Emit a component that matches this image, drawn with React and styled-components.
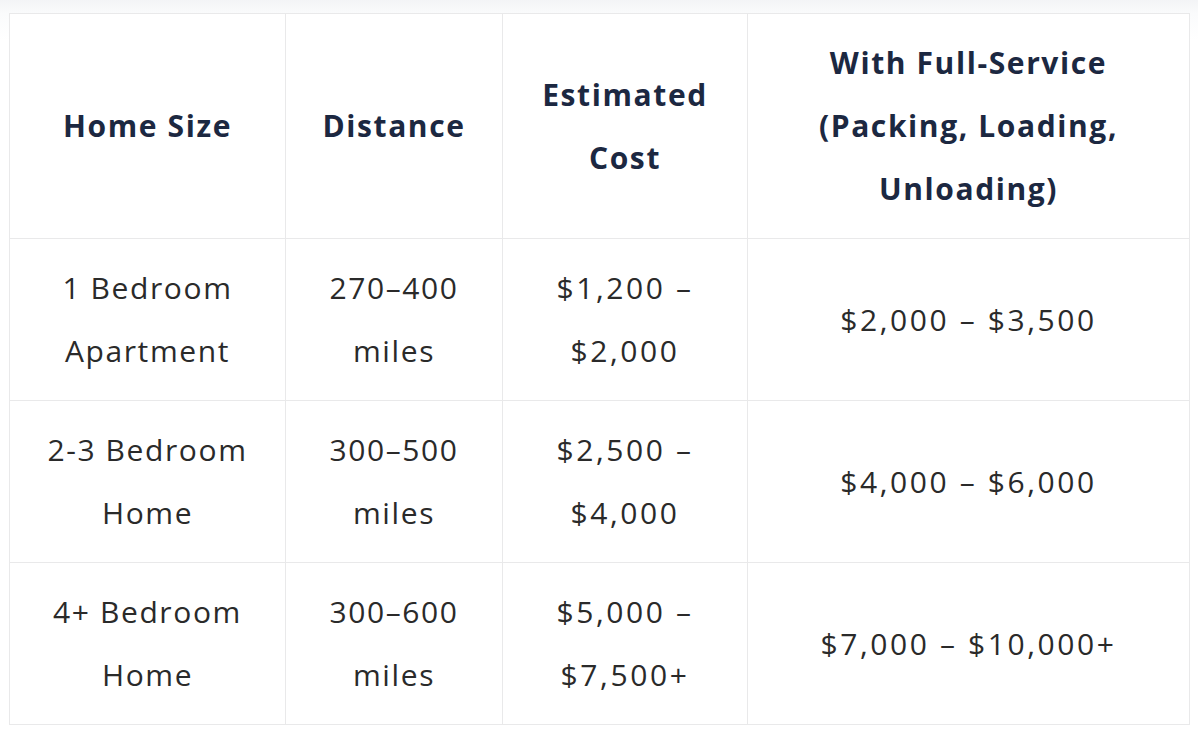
import React from 'react';
import styled, { createGlobalStyle } from 'styled-components';

const GlobalStyle = createGlobalStyle`
  html, body {
    margin: 0;
    padding: 0;
    background: #ffffff;
  }
  body {
    font-family: "Open Sans", "Liberation Sans", sans-serif;
  }
`;

const Page = styled.div`
  width: 1198px;
  height: 733px;
  box-sizing: border-box;
  padding: 13px 9px 0 9px;
  background: linear-gradient(180deg, #f3f4f6 0px, #fafbfc 14px, #ffffff 40px);
`;

const Table = styled.table`
  border-collapse: collapse;
  table-layout: fixed;
  width: 1181px;
  background: #ffffff;
`;

const Head = styled.th`
  border: 1px solid #e9e9ea;
  padding: 17px 12px 18px;
  box-sizing: border-box;
  font-size: 30px;
  line-height: 63px;
  font-weight: 700;
  color: #1c2841;
  letter-spacing: 1.6px;
  text-align: center;
  vertical-align: middle;
`;

const Cell = styled.td`
  border: 1px solid #e9e9ea;
  padding: 17px 10px 18px;
  box-sizing: border-box;
  font-size: 30px;
  line-height: 63px;
  font-weight: 400;
  color: #2a2a2a;
  letter-spacing: ${p => (p.$price ? '2.6px' : '1.6px')};
  text-align: center;
  vertical-align: middle;
`;

const columns = [
  { label: 'Home Size', width: 276 },
  { label: 'Distance', width: 217 },
  { label: 'Estimated Cost', width: 245 },
  { label: 'With Full-Service (Packing, Loading, Unloading)', width: 442 },
];

const rows = [
  ['1 Bedroom Apartment', '270–400 miles', '$1,200 – $2,000', '$2,000 – $3,500'],
  ['2-3 Bedroom Home', '300–500 miles', '$2,500 – $4,000', '$4,000 – $6,000'],
  ['4+ Bedroom Home', '300–600 miles', '$5,000 – $7,500+', '$7,000 – $10,000+'],
];

export default function App() {
  return (
    <>
      <GlobalStyle />
      <Page>
        <Table>
          <colgroup>
            {columns.map(c => (
              <col key={c.label} style={{ width: c.width }} />
            ))}
          </colgroup>
          <thead>
            <tr>
              {columns.map(c => (
                <Head key={c.label}>{c.label}</Head>
              ))}
            </tr>
          </thead>
          <tbody>
            {rows.map((r, i) => (
              <tr key={i}>
                {r.map((v, j) => (
                  <Cell key={j} $price={j >= 2}>{v}</Cell>
                ))}
              </tr>
            ))}
          </tbody>
        </Table>
      </Page>
    </>
  );
}
